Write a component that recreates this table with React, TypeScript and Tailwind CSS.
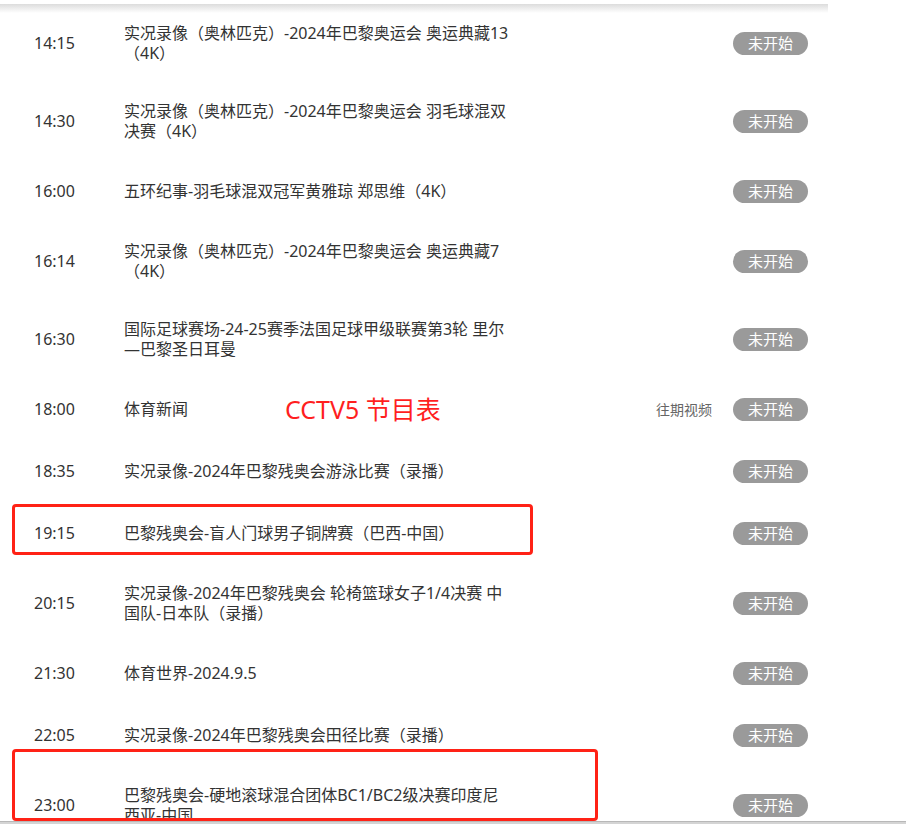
import React from "react";

interface Program {
  time: string;
  lines: string[];
  replay?: boolean;
}

const programs: Program[] = [
  { time: "14:15", lines: ["实况录像（奥林匹克）-2024年巴黎奥运会 奥运典藏13", "（4K）"] },
  { time: "14:30", lines: ["实况录像（奥林匹克）-2024年巴黎奥运会 羽毛球混双", "决赛（4K）"] },
  { time: "16:00", lines: ["五环纪事-羽毛球混双冠军黄雅琼 郑思维（4K）"] },
  { time: "16:14", lines: ["实况录像（奥林匹克）-2024年巴黎奥运会 奥运典藏7", "（4K）"] },
  { time: "16:30", lines: ["国际足球赛场-24-25赛季法国足球甲级联赛第3轮 里尔", "—巴黎圣日耳曼"] },
  { time: "18:00", lines: ["体育新闻"], replay: true },
  { time: "18:35", lines: ["实况录像-2024年巴黎残奥会游泳比赛（录播）"] },
  { time: "19:15", lines: ["巴黎残奥会-盲人门球男子铜牌赛（巴西-中国）"] },
  { time: "20:15", lines: ["实况录像-2024年巴黎残奥会 轮椅篮球女子1/4决赛 中", "国队-日本队（录播）"] },
  { time: "21:30", lines: ["体育世界-2024.9.5"] },
  { time: "22:05", lines: ["实况录像-2024年巴黎残奥会田径比赛（录播）"] },
  { time: "23:00", lines: ["巴黎残奥会-硬地滚球混合团体BC1/BC2级决赛印度尼", "西亚-中国"] },
];

function Row({ item }: { item: Program }) {
  const tall = item.lines.length > 1;
  return (
    <div className={`flex items-center shrink-0 pl-[34px] pr-[98px] ${tall ? "h-[78px]" : "h-[62px]"}`}>
      <div className="w-[90px] text-[16px] text-[#333]">{item.time}</div>
      <div className="w-[430px] text-[16px] leading-[20px] text-[#333]">
        {item.lines.map((l, i) => (
          <div key={i} className="whitespace-nowrap">
            {l}
          </div>
        ))}
      </div>
      <div className="flex flex-1 items-center justify-end gap-[21px]">
        {item.replay && <span className="text-[14px] text-[#666]">往期视频</span>}
        <span className="flex h-[23px] w-[75px] items-center justify-center rounded-full bg-[#9a9a9a] text-[15px] text-white">
          未开始
        </span>
      </div>
    </div>
  );
}

export default function App() {
  return (
    <div
      className="flex h-[824px] w-[906px] flex-col overflow-hidden bg-white"
      style={{ fontFamily: '"Noto Sans", "Noto Sans CJK SC", sans-serif' }}
    >
      <div className="relative flex-1 overflow-hidden">
        <div className="flex flex-col pt-[4px]">
          {programs.map((p) => (
            <Row key={p.time} item={p} />
          ))}
        </div>

        {/* header shadow */}
        <div className="absolute left-0 top-[4px] h-[9px] w-[828px] bg-gradient-to-b from-[#dcdcdc] to-white" />

        {/* annotations */}
        <div className="absolute left-[285px] top-[393px] text-[25px] leading-[32px] text-[#ff1f1f]">
          CCTV5 节目表
        </div>
        <div className="absolute left-[12px] top-[504px] h-[51px] w-[521px] rounded-[4px] border-[3px] border-[#ff2216]" />
        <div className="absolute left-[12px] top-[749px] h-[72px] w-[586px] rounded-[4px] border-[3px] border-[#ff2216]" />
      </div>
      <div className="h-[3px] shrink-0 border-t border-[#b8b8b8] bg-[#d4d4d4]" />
    </div>
  );
}
